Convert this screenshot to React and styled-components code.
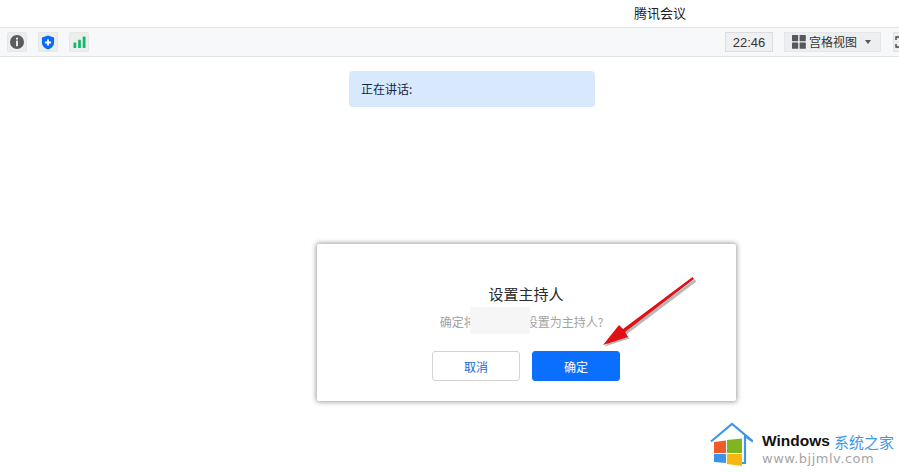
import React from 'react';
import styled, { createGlobalStyle } from 'styled-components';

const CJK = `"Noto Sans CJK SC", "Liberation Sans", sans-serif`;

const Global = createGlobalStyle`
  html, body { margin: 0; padding: 0; background: #fff; }
  body { width: 899px; height: 472px; overflow: hidden; font-family: ${CJK}; }
  * { box-sizing: border-box; }
`;

const Root = styled.div`
  position: relative;
  width: 899px;
  height: 472px;
  overflow: hidden;
`;

const TitleBar = styled.div`
  height: 28px;
  padding: 0 0 3px 634px;
  display: flex;
  align-items: center;
  background: #fff;
  border-bottom: 1px solid #e3e4e6;
  font-size: 13px;
  color: #222;
`;

const Toolbar = styled.div`
  height: 29px;
  display: flex;
  align-items: center;
  padding: 0 0 0 7px;
  background: #f7f8fa;
  border-bottom: 1px solid #e3e4e6;
`;

const IconButton = styled.div`
  width: 20px;
  height: 20px;
  margin-right: 11px;
  display: flex;
  align-items: center;
  justify-content: center;
  background: #eceded;
  border: 1px solid #e6e7e9;
  border-radius: 2px;
`;

const Spacer = styled.div`
  flex: 1;
`;

const Clock = styled.div`
  width: 48px;
  height: 20px;
  margin-right: 11px;
  display: flex;
  align-items: center;
  justify-content: center;
  background: #eff0f1;
  border: 1px solid #dcdde0;
  font: 13px "Liberation Sans", sans-serif;
  color: #333;
`;

const ViewButton = styled.div`
  width: 97px;
  height: 20px;
  margin-right: 12px;
  padding: 0 0 1px 7px;
  display: flex;
  align-items: center;
  background: #eceef0;
  border: 1px solid #e6e7e9;
  font-size: 12px;
  color: #333;
`;

const ViewLabel = styled.span`
  margin-left: 3px;
  white-space: nowrap;
`;

const Caret = styled.span`
  margin-left: 8px;
  width: 0;
  height: 0;
  border-left: 3px solid transparent;
  border-right: 3px solid transparent;
  border-top: 4px solid #555;
`;

const FullButton = styled.div`
  flex: none;
  width: 16px;
  height: 20px;
  margin-right: -10px;
  display: flex;
  align-items: center;
  justify-content: flex-start;
  padding-left: 1px;
  background: #eceef0;
  border: 1px solid #e0e1e3;
`;

const Main = styled.main`
  padding: 14px 0 0 349px;
`;

const SpeakerBanner = styled.div`
  width: 246px;
  height: 36px;
  padding: 0 0 2px 12px;
  display: flex;
  align-items: center;
  background: #d8e8fd;
  border-radius: 4px;
  font-size: 12px;
  color: #10264d;
`;

const Dialog = styled.div`
  position: absolute;
  left: 317px;
  top: 244px;
  width: 419px;
  height: 157px;
  padding: 39px 1px 0 0;
  display: flex;
  flex-direction: column;
  align-items: center;
  background: #fff;
  border-radius: 2px;
  box-shadow: 0 0 5px 1px rgba(0, 0, 0, 0.38);
`;

const DialogTitle = styled.div`
  font-size: 15px;
  line-height: 22px;
  color: #2a2a2a;
`;

const DialogText = styled.div`
  position: relative;
  margin: 8px 9px 0 0;
  display: flex;
  font-size: 12px;
  line-height: 18px;
  color: #a2a2a2;
  white-space: nowrap;
`;

const NameGap = styled.span`
  width: 50px;
`;

const Redaction = styled.span`
  position: absolute;
  left: 30px;
  top: -6px;
  width: 60px;
  height: 27px;
  background: #f6f6f6;
`;

const Actions = styled.div`
  margin-top: 20px;
  display: flex;
  gap: 12px;
`;

const Button = styled.button`
  width: 88px;
  height: 30px;
  padding: 0;
  border-radius: 3px;
  font-family: ${CJK};
  font-size: 12px;
  border: 1px solid ${p => (p.$primary ? '#0a6fff' : '#d2d3d5')};
  background: ${p => (p.$primary ? '#0a6fff' : '#fff')};
  color: ${p => (p.$primary ? '#fff' : '#1468d8')};
`;

const Arrow = styled.svg`
  position: absolute;
  left: 600px;
  top: 270px;
`;

const Watermark = styled.div`
  position: absolute;
  left: 709px;
  top: 422px;
  display: flex;
  align-items: flex-start;
`;

const BrandText = styled.div`
  margin: 9px 0 0 9px;
`;

const BrandTop = styled.div`
  display: flex;
  align-items: center;
  height: 20px;
  font: bold 15.5px "Liberation Sans", sans-serif;
  color: #111;
  white-space: nowrap;
`;

const BrandCn = styled.span`
  margin-left: 4px;
  font: 15px ${CJK};
  color: #3f97e8;
`;

const BrandUrl = styled.div`
  font: 13px "DejaVu Sans", sans-serif;
  letter-spacing: 0.5px;
  line-height: 15px;
  color: #a5a5a5;
  white-space: nowrap;
`;

const InfoIcon = () => (
  <svg width="14" height="14" viewBox="0 0 15 15">
    <circle cx="7.5" cy="7.5" r="7.5" fill="#5b5c60" />
    <rect x="6.4" y="2.8" width="2.2" height="2.2" rx="1" fill="#f2f2f2" />
    <rect x="6.5" y="6" width="2" height="6" fill="#f2f2f2" />
  </svg>
);

const ShieldIcon = () => (
  <svg width="14" height="15" viewBox="0 0 15 16">
    <path d="M7.5 0.5 L14 2.6 V8 C14 11.8 11 14.4 7.5 15.6 C4 14.4 1 11.8 1 8 V2.6 Z" fill="#0a6cf5" />
    <rect x="4.2" y="7" width="6.6" height="2" fill="#fff" />
    <rect x="6.5" y="4.7" width="2" height="6.6" fill="#fff" />
  </svg>
);

const SignalIcon = () => (
  <svg width="13" height="12" viewBox="0 0 14 13">
    <rect x="0.5" y="7" width="3" height="6" rx="0.5" fill="#12b868" />
    <rect x="5.5" y="4" width="3" height="9" rx="0.5" fill="#12b868" />
    <rect x="10.5" y="0.5" width="3" height="12.5" rx="0.5" fill="#12b868" />
  </svg>
);

const GridIcon = () => (
  <svg width="14" height="14" viewBox="0 0 14 14" fill="#55575b">
    <rect x="0" y="0" width="6.2" height="6.2" rx="0.6" />
    <rect x="7.6" y="0" width="6.2" height="6.2" rx="0.6" />
    <rect x="0" y="7.6" width="6.2" height="6.2" rx="0.6" />
    <rect x="7.6" y="7.6" width="6.2" height="6.2" rx="0.6" />
  </svg>
);

const FullIcon = () => (
  <svg width="12" height="12" viewBox="0 0 12 12" fill="none" stroke="#444" strokeWidth="1.4">
    <path d="M1 4 V1 H4 M8 1 H11 V4 M11 8 V11 H8 M4 11 H1 V8" />
  </svg>
);

const RedArrow = () => (
  <Arrow width="100" height="80" viewBox="0 0 100 80">
    <path d="M93 8 L23 60 L20 56 L3 75 L28 67 L25 63 L95 10 Z" fill="#000" opacity="0.28" transform="translate(1.5 1.5)" />
    <path d="M92.5 7 L23 59 L19 55 L3 75 L28 67 L25 62 L94 9 Z" fill="#e01015" />
  </Arrow>
);

const HouseLogo = () => (
  <svg width="44" height="46" viewBox="0 0 44 46">
    <path d="M2 19.5 L23 2 L44 19.5 L36 14 V41 H33" fill="none" stroke="#3f97e8" strokeWidth="2.2" />
    <path d="M5 20 L17 18.5 V31 H5 Z" fill="#ee5a2a" />
    <path d="M18 18 L33 16.5 V31 H18 Z" fill="#7fb51f" />
    <path d="M5 32 H17 V41 L5 40 Z" fill="#3d93ec" />
    <path d="M18 32 H33 V44 L18 42 Z" fill="#f7b614" />
  </svg>
);

export default function App() {
  return (
    <Root>
      <Global />
      <TitleBar>腾讯会议</TitleBar>
      <Toolbar>
        <IconButton><InfoIcon /></IconButton>
        <IconButton><ShieldIcon /></IconButton>
        <IconButton><SignalIcon /></IconButton>
        <Spacer />
        <Clock>22:46</Clock>
        <ViewButton>
          <GridIcon />
          <ViewLabel>宫格视图</ViewLabel>
          <Caret />
        </ViewButton>
        <FullButton><FullIcon /></FullButton>
      </Toolbar>
      <Main>
        <SpeakerBanner>正在讲话:</SpeakerBanner>
      </Main>
      <Dialog>
        <DialogTitle>设置主持人</DialogTitle>
        <DialogText>
          确定将<NameGap /><Redaction />设置为主持人?
        </DialogText>
        <Actions>
          <Button>取消</Button>
          <Button $primary>确定</Button>
        </Actions>
      </Dialog>
      <RedArrow />
      <Watermark>
        <HouseLogo />
        <BrandText>
          <BrandTop>Windows<BrandCn>系统之家</BrandCn></BrandTop>
          <BrandUrl>www.bjjmlv.com</BrandUrl>
        </BrandText>
      </Watermark>
    </Root>
  );
}
